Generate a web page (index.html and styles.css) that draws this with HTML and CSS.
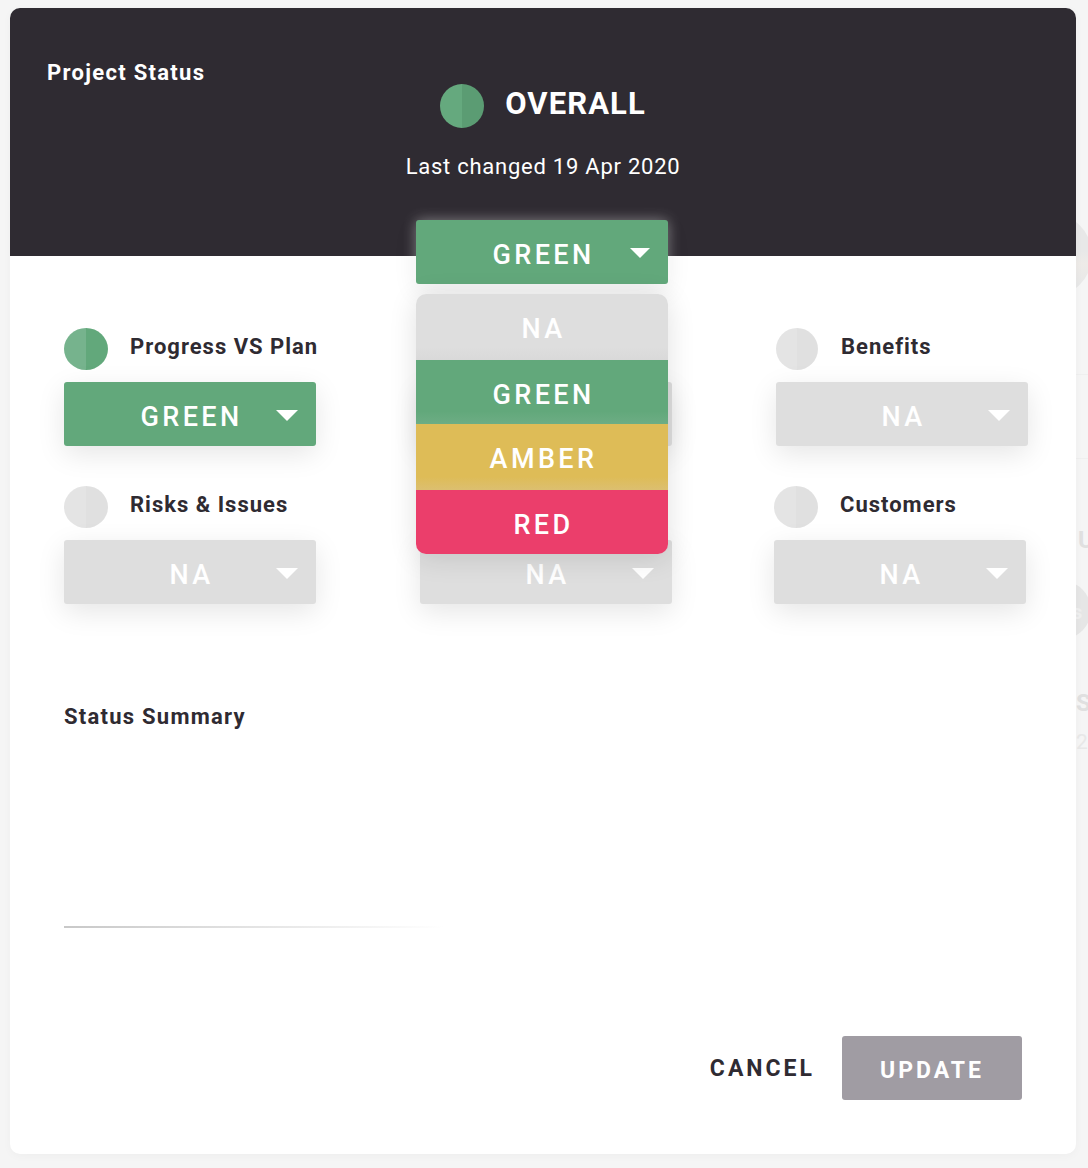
FILE: index.html
```html
<!DOCTYPE html>
<html lang="en">
<head>
    <meta charset="UTF-8">
    <meta name="viewport" content="width=device-width, initial-scale=1.0">
    <title>Project Status</title>
    <link rel="stylesheet" href="styles.css">
</head>
<body>
    <!-- page behind the modal, only a sliver shows on the right -->
    <div class="backdrop">
        <div class="ghost-avatar"></div>
        <div class="ghost-line ghost-line-a"></div>
        <div class="ghost-line ghost-line-b"></div>
        <span class="ghost-text ghost-u">U</span>
        <div class="ghost-badge"></div>
        <span class="ghost-text ghost-badge-text">s</span>
        <span class="ghost-text ghost-s">S</span>
        <span class="ghost-text ghost-num">22</span>
    </div>

    <div class="modal">
        <div class="modal-header">
            <h2 class="modal-title">Project Status</h2>
            <div class="overall">
                <div class="overall-row">
                    <span class="dot dot-green-dark"></span>
                    <span class="overall-label">OVERALL</span>
                </div>
                <p class="overall-changed">Last changed 19 Apr 2020</p>
                <div class="select-wrap">
                    <div class="select select-green select-glow">
                        <span class="select-value">GREEN</span>
                        <span class="caret caret-small"></span>
                    </div>
                    <ul class="menu">
                        <li class="menu-item item-na">NA</li>
                        <li class="menu-item item-green">GREEN</li>
                        <li class="menu-item item-amber">AMBER</li>
                        <li class="menu-item item-red">RED</li>
                    </ul>
                </div>
            </div>
        </div>

        <div class="modal-body">
            <div class="status-grid">
                <div class="status">
                    <div class="status-head">
                        <span class="dot dot-green"></span>
                        <span class="status-label">Progress VS Plan</span>
                    </div>
                    <div class="select select-green">
                        <span class="select-value">GREEN</span>
                        <span class="caret"></span>
                    </div>
                </div>
                <div class="status">
                    <div class="status-head">
                        <span class="dot dot-grey"></span>
                    </div>
                    <div class="select select-na">
                        <span class="caret"></span>
                    </div>
                </div>
                <div class="status">
                    <div class="status-head status-head-wide">
                        <span class="dot dot-grey dot-small"></span>
                        <span class="status-label">Benefits</span>
                    </div>
                    <div class="select select-na">
                        <span class="select-value">NA</span>
                        <span class="caret"></span>
                    </div>
                </div>
                <div class="status">
                    <div class="status-head">
                        <span class="dot dot-grey"></span>
                        <span class="status-label">Risks &amp; Issues</span>
                    </div>
                    <div class="select select-na">
                        <span class="select-value">NA</span>
                        <span class="caret"></span>
                    </div>
                </div>
                <div class="status">
                    <div class="status-head">
                        <span class="dot dot-grey"></span>
                    </div>
                    <div class="select select-na">
                        <span class="select-value">NA</span>
                        <span class="caret"></span>
                    </div>
                </div>
                <div class="status status-shift">
                    <div class="status-head">
                        <span class="dot dot-grey"></span>
                        <span class="status-label">Customers</span>
                    </div>
                    <div class="select select-na">
                        <span class="select-value">NA</span>
                        <span class="caret"></span>
                    </div>
                </div>
            </div>

            <div class="summary">
                <label class="summary-label">Status Summary</label>
                <div class="summary-line"></div>
            </div>

            <div class="actions">
                <button class="btn-cancel">CANCEL</button>
                <button class="btn-update">UPDATE</button>
            </div>
        </div>
    </div>
</body>
</html>
```

FILE: styles.css
```css
:root {
    --ink: #2f2b32;
    --green: #62a87b;
    --amber: #debc57;
    --red: #eb3e6b;
    --na: #dedede;
}

* {
    margin: 0;
    padding: 0;
    box-sizing: border-box;
}

html, body {
    height: 100%;
}

body {
    font-family: Roboto, "Noto Sans", sans-serif;
    background-color: #f5f5f5;
    color: var(--ink);
    padding: 8px 12px 14px 10px;
    overflow: hidden;
}

.backdrop {
    position: absolute;
    top: 0;
    left: 1076px;
    width: 12px;
    height: 1168px;
    overflow: hidden;
}

.ghost-avatar {
    position: absolute;
    top: 213px;
    left: -68px;
    width: 84px;
    height: 84px;
    border-radius: 50%;
    background: linear-gradient(180deg, #e8e8e8 45%, #eeebe8 60%, #e8e8e8 85%);
}

.ghost-line {
    position: absolute;
    left: 0;
    width: 12px;
    height: 1px;
    background-color: #efefef;
}

.ghost-line-a {
    top: 374px;
}

.ghost-line-b {
    top: 458px;
}

.ghost-badge {
    position: absolute;
    top: 581px;
    left: -43px;
    width: 58px;
    height: 58px;
    border-radius: 50%;
    background-color: #e6e6e6;
}

.ghost-text {
    position: absolute;
    left: 2px;
    color: #e0e0e0;
    font-weight: 700;
    font-size: 24px;
    line-height: 24px;
}

.ghost-u {
    top: 528px;
}

.ghost-badge-text {
    top: 600px;
    left: -4px;
    font-size: 20px;
    color: #efefef;
}

.ghost-s {
    top: 691px;
    left: 0;
}

.ghost-num {
    top: 730px;
    left: 0;
    font-weight: 400;
    font-size: 21px;
    color: #e8e8e8;
}

.modal {
    position: relative;
    height: 1146px;
    background-color: #fff;
    border-radius: 10px;
    box-shadow: 0 2px 10px rgba(0, 0, 0, 0.03);
}

.modal-header {
    position: relative;
    height: 248px;
    background-color: var(--ink);
    border-radius: 10px 10px 0 0;
    color: #fff;
}

.modal-title {
    position: absolute;
    top: 51px;
    left: 37px;
    font-size: 22px;
    line-height: 28px;
    font-weight: 700;
    letter-spacing: 1.3px;
}

.overall {
    display: flex;
    flex-direction: column;
    align-items: center;
    width: 274px;
    margin-left: 396px;
    padding-top: 76px;
}

.overall-row {
    display: flex;
    align-items: center;
    gap: 21px;
    height: 44px;
}

.overall-label {
    font-size: 31px;
    font-weight: 700;
    letter-spacing: 1.1px;
    margin-top: -6px;
}

.overall-changed {
    margin-top: 25px;
    font-size: 22px;
    line-height: 28px;
    letter-spacing: 0.75px;
    white-space: nowrap;
}

.select-wrap {
    position: relative;
    width: 252px;
    margin-top: 39px;
    margin-left: -2px;
    z-index: 2;
}

.dot {
    display: block;
    flex: none;
    width: 44px;
    height: 42px;
    border-radius: 50%;
}

.dot-small {
    width: 42px;
}

.dot-green-dark {
    height: 44px;
    background: linear-gradient(90deg, #65a97e 50%, #5b9c73 50%);
}

.dot-green {
    background: linear-gradient(90deg, #76b38d 50%, #62a87b 50%);
}

.dot-grey {
    background: linear-gradient(90deg, #e4e4e4 50%, #e0e0e0 50%);
}

.select {
    position: relative;
    display: flex;
    align-items: center;
    justify-content: center;
    height: 64px;
    padding: 6px 0 0 3px;
    border-radius: 3px;
    color: #fff;
    font-size: 27px;
    font-weight: 500;
    letter-spacing: 3.4px;
    box-shadow: 0 8px 28px rgba(0, 0, 0, 0.1);
}

.select-green {
    background-color: var(--green);
}

.select-na {
    background-color: var(--na);
}

.select-glow {
    box-shadow: 0 0 14px rgba(255, 255, 255, 0.4), 0 8px 24px rgba(0, 0, 0, 0.08);
}

.caret {
    position: absolute;
    top: 28px;
    right: 18px;
    width: 0;
    height: 0;
    border-left: 11px solid transparent;
    border-right: 11px solid transparent;
    border-top: 11px solid #fff;
}

.caret-small {
    border-left-width: 10px;
    border-right-width: 10px;
    border-top-width: 10px;
}

.menu {
    position: absolute;
    top: 74px;
    left: 0;
    width: 252px;
    list-style: none;
    border-radius: 10px;
    overflow: hidden;
    box-shadow: 0 4px 28px rgba(0, 0, 0, 0.12);
}

.menu-item {
    display: flex;
    align-items: center;
    justify-content: center;
    padding: 6px 0 0 3px;
    color: #fff;
    font-size: 27px;
    font-weight: 500;
    letter-spacing: 3.4px;
}

.item-na {
    height: 66px;
    padding-top: 4px;
    background: linear-gradient(180deg, #dedede 80%, #d9d9d9);
}

.item-green {
    height: 64px;
    background: linear-gradient(180deg, #62a87b 80%, #6dad84);
}

.item-amber {
    height: 66px;
    padding-top: 4px;
    background: linear-gradient(180deg, #debc57 80%, #dcbf70);
}

.item-red {
    height: 64px;
    background-color: var(--red);
}

.modal-body {
    padding: 72px 50px 0 54px;
}

.status-grid {
    display: grid;
    grid-template-columns: repeat(3, 252px);
    column-gap: 104px;
    row-gap: 40px;
}

.status-shift {
    margin-left: -2px;
    margin-right: 2px;
}

.status-head {
    display: flex;
    align-items: center;
    gap: 22px;
    height: 42px;
    margin-bottom: 12px;
}

.status-head-wide {
    gap: 23px;
}

.status-label {
    font-size: 22px;
    font-weight: 700;
    letter-spacing: 1px;
    white-space: nowrap;
    margin-top: -6px;
}

.summary {
    margin-top: 99px;
}

.summary-label {
    display: block;
    font-size: 22px;
    line-height: 28px;
    font-weight: 700;
    letter-spacing: 1.25px;
}

.summary-line {
    width: 380px;
    height: 2px;
    margin-top: 195px;
    background: linear-gradient(90deg, #c8c8c8, #fff);
}

.actions {
    display: flex;
    justify-content: flex-end;
    align-items: center;
    gap: 27px;
    margin-top: 108px;
    margin-right: 4px;
}

.btn-cancel, .btn-update {
    border: none;
    font-family: inherit;
    font-size: 23px;
    font-weight: 700;
    letter-spacing: 3px;
}

.btn-cancel {
    background: none;
    color: var(--ink);
}

.btn-update {
    width: 180px;
    height: 64px;
    padding-top: 4px;
    border-radius: 3px;
    background-color: #a09ca3;
    color: #fff;
}
```
